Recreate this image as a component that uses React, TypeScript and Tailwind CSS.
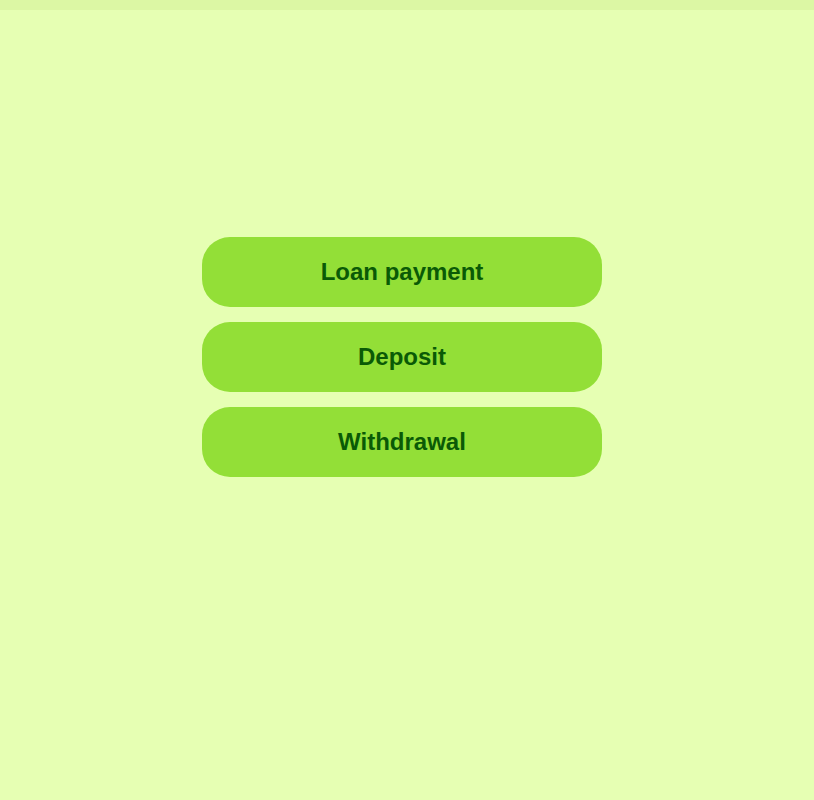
export default function App() {
  const items = ["Loan payment", "Deposit", "Withdrawal"];
  return (
    <div className="min-h-[800px] bg-[#e6ffb3] font-['Liberation_Sans',Arial,sans-serif]">
      <div className="h-[10px] bg-[#dcf7a4]" />
      <div className="pt-[227px] pl-[202px] flex flex-col gap-[15px]">
        {items.map((t) => (
          <button
            key={t}
            className="w-[400px] h-[70px] rounded-[28px] bg-[#93df37] text-[#0a5a06] text-[24px] leading-none font-bold flex items-center justify-center"
          >
            {t}
          </button>
        ))}
      </div>
    </div>
  );
}
